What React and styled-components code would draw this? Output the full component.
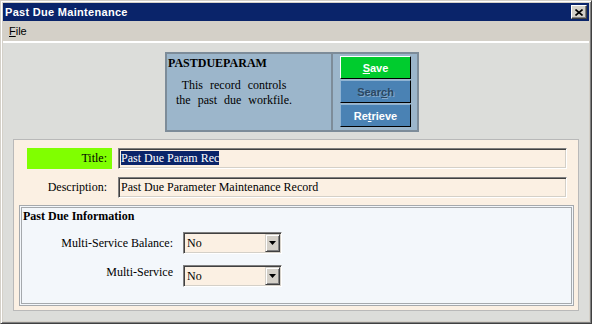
import React from "react";
import styled, { createGlobalStyle } from "styled-components";

const GlobalStyle = createGlobalStyle`
  html, body {
    margin: 0;
    padding: 0;
    background: #d4d0c8;
  }
  body {
    font-family: "Liberation Sans", Arial, sans-serif;
  }
`;

const serif = `"Liberation Serif", "Times New Roman", serif`;

const Window = styled.div`
  width: 592px;
  height: 324px;
  box-sizing: border-box;
  display: flex;
  flex-direction: column;
  background: #d4d0c8;
  border: 1px solid;
  border-color: #d4d0c8 #404040 #404040 #d4d0c8;
  box-shadow: inset 1px 1px #fff, inset -1px -1px #808080;
  padding: 2px;
`;

const TitleBar = styled.div`
  height: 18px;
  flex: none;
  display: flex;
  align-items: center;
  justify-content: space-between;
  padding: 0 2px;
  background: #0a246a;
  color: #fff;
  font-size: 11px;
  font-weight: bold;
  letter-spacing: 0.3px;
`;

const CloseButton = styled.div`
  width: 16px;
  height: 14px;
  box-sizing: border-box;
  display: flex;
  align-items: center;
  justify-content: center;
  background: #d4d0c8;
  border: 1px solid;
  border-color: #fff #404040 #404040 #fff;
  box-shadow: inset -1px -1px #808080;
`;

const MenuBar = styled.div`
  height: 20px;
  flex: none;
  display: flex;
  align-items: center;
  padding-left: 6px;
  font-size: 11px;
  color: #000;
`;

const Client = styled.div`
  flex: 1;
  display: flex;
  flex-direction: column;
  align-items: flex-start;
  border-top: 2px solid #fff;
  background: #dcddda;
`;

const HeaderPanel = styled.div`
  width: 254px;
  height: 80px;
  box-sizing: border-box;
  margin: 9px 0 0 162px;
  display: flex;
  border: 2px solid #7d8c99;
  background: #9cb6cb;
`;

const InfoSection = styled.div`
  width: 163px;
  flex: none;
  border-right: 2px solid #7d8c99;
  padding: 2px 0 0 1px;
  font-family: ${serif};
  font-size: 12px;
  color: #000;
`;

const RecordName = styled.div`
  font-weight: bold;
  line-height: 14px;
`;

const RecordNote = styled.div`
  width: 132px;
  margin-top: 8px;
  text-align: center;
  word-spacing: 4px;
  line-height: 15px;
`;

const ButtonColumn = styled.div`
  flex: 1;
  display: flex;
  flex-direction: column;
  gap: 1px;
  padding: 2px 0 0 7px;
`;

const ActionButton = styled.div`
  width: 71px;
  height: 23px;
  box-sizing: border-box;
  display: flex;
  align-items: center;
  justify-content: center;
  background: ${(p) => p.$bg};
  border: 1px solid;
  border-color: ${(p) => p.$light} #000 #000 ${(p) => p.$light};
  font-size: 11px;
  font-weight: bold;
  color: ${(p) => (p.$disabled ? "#2b4863" : "#fff")};
  text-shadow: ${(p) => (p.$disabled ? "1px 1px 0 #86a9c9" : "none")};
`;

const FormPanel = styled.div`
  width: 566px;
  box-sizing: border-box;
  margin: 7px 0 0 10px;
  padding: 8px 4px 4px 5px;
  background: #fbf0e3;
  border: 1px solid #b9b9b9;
  font-family: ${serif};
  font-size: 12px;
  color: #000;
`;

const FieldRow = styled.div`
  display: grid;
  grid-template-columns: 91px 1fr;
  height: 21px;
  padding: 0 7px 0 8px;
  margin-top: ${(p) => p.$gap || 0}px;
`;

const FieldLabel = styled.div`
  width: 85px;
  box-sizing: border-box;
  padding-right: 5px;
  text-align: right;
  line-height: 21px;
  background: ${(p) => (p.$highlight ? "#80ff00" : "transparent")};
`;

const TextBox = styled.div`
  box-sizing: border-box;
  height: 21px;
  padding-left: 2px;
  line-height: 18px;
  white-space: nowrap;
  overflow: hidden;
  border: 1px solid;
  border-color: #808080 #fff #fff #808080;
  box-shadow: inset 1px 1px #404040, inset -1px -1px #d4d0c8;
`;

const Selected = styled.span`
  background: #0a246a;
  color: #fff;
`;

const InfoPanel = styled.div`
  height: 101px;
  box-sizing: border-box;
  margin-top: 7px;
  padding: 1px 0 0 1px;
  border: 3px double #a5a9ad;
  background: #f3f7fb;
`;

const InfoTitle = styled.div`
  font-weight: bold;
  line-height: 15px;
`;

const SelectRow = styled.div`
  display: grid;
  grid-template-columns: 150px 99px;
  column-gap: 10px;
  align-items: ${(p) => p.$align || "center"};
  margin-top: ${(p) => p.$gap}px;
`;

const SelectLabel = styled.div`
  text-align: right;
  line-height: 15px;
`;

const Dropdown = styled.div`
  height: 22px;
  box-sizing: border-box;
  display: flex;
  background: #fbf0e3;
  border: 1px solid;
  border-color: #808080 #fff #fff #808080;
  box-shadow: inset 1px 1px #404040, inset -1px -1px #d4d0c8;
  padding: 1px;
`;

const DropdownValue = styled.div`
  flex: 1;
  padding-left: 2px;
  line-height: 19px;
`;

const ArrowButton = styled.div`
  width: 15px;
  height: 18px;
  box-sizing: border-box;
  display: flex;
  align-items: center;
  justify-content: center;
  background: #d4d0c8;
  border: 1px solid;
  border-color: #d4d0c8 #404040 #404040 #d4d0c8;
  box-shadow: inset 1px 1px #fff, inset -1px -1px #808080;
`;

const Select = ({ value }) => (
  <Dropdown>
    <DropdownValue>{value}</DropdownValue>
    <ArrowButton>
      <svg width="7" height="4" viewBox="0 0 7 4">
        <path d="M0 0h7L3.5 4z" fill="#000" />
      </svg>
    </ArrowButton>
  </Dropdown>
);

export default function App() {
  return (
    <>
      <GlobalStyle />
      <Window>
        <TitleBar>
          <span>Past Due Maintenance</span>
          <CloseButton>
            <svg width="8" height="7" viewBox="0 0 8 7">
              <path d="M0.5 0.5L7.5 6.5M7.5 0.5L0.5 6.5" stroke="#000" strokeWidth="1.6" />
            </svg>
          </CloseButton>
        </TitleBar>
        <MenuBar>
          <span>
            <u>F</u>ile
          </span>
        </MenuBar>
        <Client>
          <HeaderPanel>
            <InfoSection>
              <RecordName>PASTDUEPARAM</RecordName>
              <RecordNote>
                This record controls
                <br />
                the past due workfile.
              </RecordNote>
            </InfoSection>
            <ButtonColumn>
              <ActionButton $bg="#00cc2e" $light="#fff">
                <span>
                  <u>S</u>ave
                </span>
              </ActionButton>
              <ActionButton $bg="#4a82b4" $light="#8fb3d3" $disabled>
                <span>
                  Sear<u>c</u>h
                </span>
              </ActionButton>
              <ActionButton $bg="#4a82b4" $light="#8fb3d3">
                <span>
                  Re<u>t</u>rieve
                </span>
              </ActionButton>
            </ButtonColumn>
          </HeaderPanel>
          <FormPanel>
            <FieldRow>
              <FieldLabel $highlight>Title:</FieldLabel>
              <TextBox>
                <Selected>Past Due Param Rec</Selected>
              </TextBox>
            </FieldRow>
            <FieldRow $gap={8}>
              <FieldLabel>Description:</FieldLabel>
              <TextBox>Past Due Parameter Maintenance Record</TextBox>
            </FieldRow>
            <InfoPanel>
              <InfoTitle>Past Due Information</InfoTitle>
              <SelectRow $gap={8}>
                <SelectLabel>Multi-Service Balance:</SelectLabel>
                <Select value="No" />
              </SelectRow>
              <SelectRow $gap={11} $align="start">
                <SelectLabel>Multi-Service</SelectLabel>
                <Select value="No" />
              </SelectRow>
            </InfoPanel>
          </FormPanel>
        </Client>
      </Window>
    </>
  );
}
